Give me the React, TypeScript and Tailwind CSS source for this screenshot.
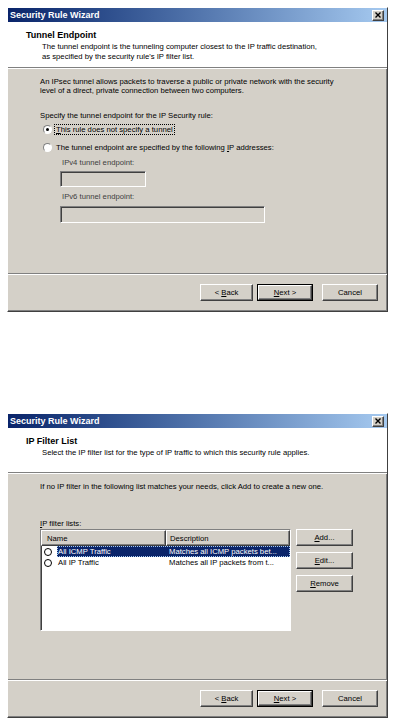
import type { ReactNode } from "react"

const raised =
  "border border-t-white border-l-white border-r-[#404040] border-b-[#404040] bg-[#d4d0c8] shadow-[inset_-1px_-1px_0_#808080]"
const sunken =
  "border border-t-[#808080] border-l-[#808080] border-r-white border-b-white shadow-[inset_1px_1px_0_#404040]"

function Button({ children, def = false, className = "" }: { children: ReactNode; def?: boolean; className?: string }) {
  if (def) {
    return (
      <div className={`border border-black ${className}`}>
        <div className={`${raised} flex h-full items-center justify-center`}>{children}</div>
      </div>
    )
  }
  return <div className={`${raised} flex items-center justify-center ${className}`}>{children}</div>
}

function TitleBar() {
  return (
    <div className="flex h-[14px] items-center justify-between bg-gradient-to-r from-[#0a246a] to-[#a6caf0] pl-[2px] pr-[3px]">
      <span className="text-[9px] font-bold leading-none text-white">Security Rule Wizard</span>
      <div className={`${raised} flex h-[11px] w-[12px] items-center justify-center`}>
        <svg width="6" height="6" viewBox="0 0 6 6" aria-hidden="true">
          <path d="M0.5 0.5L5.5 5.5M5.5 0.5L0.5 5.5" stroke="#000" strokeWidth="1.4" />
        </svg>
      </div>
    </div>
  )
}

function Footer() {
  return (
    <>
      <div className="h-px bg-[#808080]" />
      <div className="h-px bg-white" />
      <div className="flex h-[36px] items-start justify-end pr-[9px] pt-[9px] text-[7.7px]">
        <Button className="h-[17px] w-[53px]">
          <span className="whitespace-pre">{"< "}</span>
          <u>B</u>ack
        </Button>
        <Button def className="ml-[4px] h-[17px] w-[56px]">
          <u>N</u>ext<span className="whitespace-pre">{" >"}</span>
        </Button>
        <Button className="ml-[9px] h-[17px] w-[56px]">Cancel</Button>
      </div>
    </>
  )
}

function Dialog({ title, desc, headerH, bodyH, children }: { title: string; desc: ReactNode; headerH: string; bodyH: string; children: ReactNode }) {
  return (
    <div className={`${raised} ml-[7px] w-[381px]`}>
      <TitleBar />
      <div className={`bg-white pt-[8px] ${headerH}`}>
        <div className="pl-[18px] text-[9px] font-bold leading-[10px]">{title}</div>
        <div className="mt-[2px] pl-[34px] text-[7.7px] leading-[10px]">{desc}</div>
      </div>
      <div className="h-px bg-[#808080]" />
      <div className="h-px bg-white" />
      <div className={bodyH}>{children}</div>
      <Footer />
    </div>
  )
}

function Radio({ checked = false }: { checked?: boolean }) {
  return (
    <div className="flex h-[9px] w-[9px] items-center justify-center rounded-full border border-t-[#808080] border-l-[#808080] border-r-white border-b-white bg-white">
      {checked && <div className="h-[3px] w-[3px] rounded-full bg-black" />}
    </div>
  )
}

function Ring() {
  return <div className="h-[8px] w-[8px] rounded-full border-[1.5px] border-black bg-white" />
}

export default function App() {
  return (
    <div className="min-h-screen w-[394px] bg-white pt-[7px] font-['Liberation_Sans',Arial,sans-serif] text-black">
      <Dialog
        title="Tunnel Endpoint"
        headerH="h-[45px]"
        bodyH="h-[204px]"
        desc={
          <>
            The tunnel endpoint is the tunneling computer closest to the IP traffic destination,
            <br />
            as specified by the security rule's IP filter list.
          </>
        }
      >
        <div className="pl-[32px] pt-[8px] text-[7.7px] leading-[9px]">
          <p>
            An IPsec tunnel allows packets to traverse a public or private network with the security
            <br />
            level of a direct, private connection between two computers.
          </p>
          <p className="mt-[16px]">Specify the tunnel endpoint for the IP Security rule:</p>
          <div className="mt-[4px] flex h-[11px] items-center">
            <div className="ml-[3px]">
              <Radio checked />
            </div>
            <span className="ml-[3px] px-[1px] leading-[9px] outline outline-1 outline-dotted outline-black">
              <u>T</u>his rule does not specify a tunnel
            </span>
          </div>
          <div className="mt-[7px] flex h-[11px] items-center">
            <div className="ml-[3px]">
              <Radio />
            </div>
            <span className="ml-[4px]">
              The tunnel endpoint are specified by the following <u>I</u>P addresses:
            </span>
          </div>
          <div className="ml-[20px]">
            <div className="mt-[5px] pl-[2px] text-[#404040]">IPv4 tunnel endpoint:</div>
            <div className={`${sunken} mt-[4px] h-[16px] w-[86px] bg-[#d4d0c8]`} />
            <div className="mt-[5px] pl-[2px] text-[#404040]">IPv6 tunnel endpoint:</div>
            <div className={`${sunken} mt-[5px] h-[17px] w-[205px] bg-[#d4d0c8]`} />
          </div>
        </div>
      </Dialog>

      <div className="h-[101px]" />

      <Dialog
        title="IP Filter List"
        headerH="h-[44px]"
        bodyH="h-[205px]"
        desc="Select the IP filter list for the type of IP traffic to which this security rule applies."
      >
        <div className="pl-[32px] pt-[8px] text-[7.7px] leading-[9px]">
          <p>If no IP filter in the following list matches your needs, click Add to create a new one.</p>
          <p className="mt-[28px]">
            <u>I</u>P filter lists:
          </p>
          <div className="mt-[1px] flex items-start">
            <div className={`${sunken} h-[102px] w-[251px] bg-white`}>
              <div className="flex h-[16px]">
                <div className={`${raised} flex w-[125px] items-center pl-[5px]`}>Name</div>
                <div className={`${raised} flex flex-1 items-center pl-[3px]`}>Description</div>
              </div>
              <div className="flex h-[11px] items-center">
                <div className="ml-[3px]">
                  <Ring />
                </div>
                <div className="ml-[5px] flex h-full flex-1 items-center bg-[#0a246a] text-white outline outline-1 -outline-offset-1 outline-dotted outline-[#a6caf0]">
                  <span className="w-[112px] pl-[1px]">All ICMP Traffic</span>
                  <span>Matches all ICMP packets bet...</span>
                </div>
              </div>
              <div className="flex h-[11px] items-center">
                <div className="ml-[3px]">
                  <Ring />
                </div>
                <div className="ml-[5px] flex flex-1 items-center">
                  <span className="w-[112px] pl-[1px]">All IP Traffic</span>
                  <span>Matches all IP packets from t...</span>
                </div>
              </div>
            </div>
            <div className="ml-[5px] flex flex-col gap-[6px]">
              <Button className="h-[17px] w-[57px]">
                <u>A</u>dd...
              </Button>
              <Button className="h-[17px] w-[57px]">
                <u>E</u>dit...
              </Button>
              <Button className="h-[17px] w-[57px]">
                <u>R</u>emove
              </Button>
            </div>
          </div>
        </div>
      </Dialog>
    </div>
  )
}
